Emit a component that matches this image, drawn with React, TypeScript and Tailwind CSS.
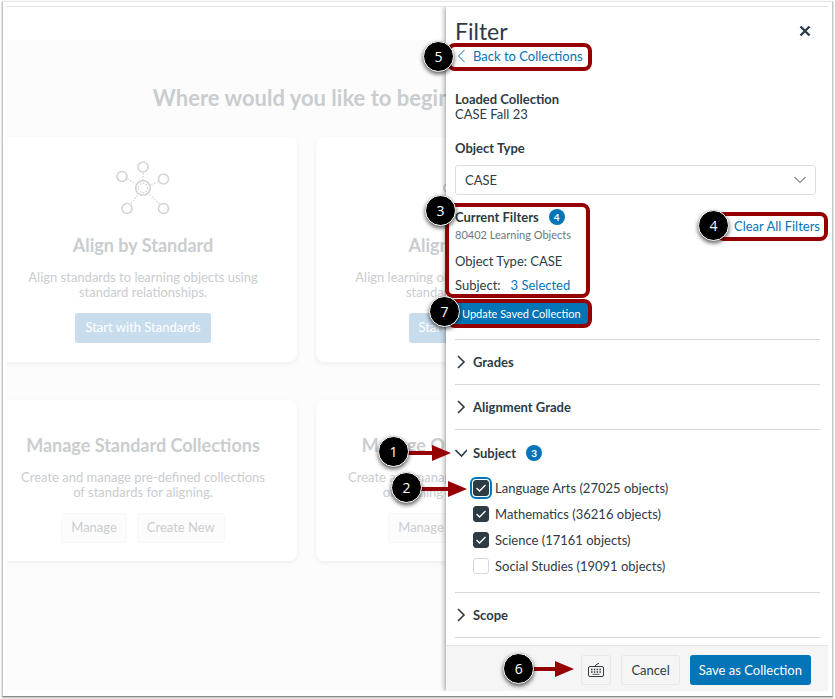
import React, { useState } from "react";

interface CalloutProps {
  label: string;
  className: string;
}

interface SubjectOption {
  id: string;
  label: string;
  checked: boolean;
}

const subjectOptions: SubjectOption[] = [
  { id: "language-arts", label: "Language Arts (27025 objects)", checked: true },
  { id: "mathematics", label: "Mathematics (36216 objects)", checked: true },
  { id: "science", label: "Science (17161 objects)", checked: true },
  { id: "social-studies", label: "Social Studies (19091 objects)", checked: false },
];

// Numbered black marker
const Callout: React.FC<CalloutProps> = ({ label, className }) => (
  <span
    className={`absolute z-20 flex size-[31px] items-center justify-center rounded-full border border-white bg-black font-['Open_Sans',sans-serif] text-[14px] font-normal leading-none text-white shadow-[0_2px_4px_rgba(0,0,0,0.65)] ${className}`}
  >
    {label}
  </span>
);

// Red outline around a control
const Highlight: React.FC<{ className: string }> = ({ className }) => (
  <span
    className={`pointer-events-none absolute z-10 rounded-lg border-4 border-[#950003] ${className}`}
  />
);

const Arrow: React.FC<{ length: number; className: string }> = ({ length, className }) => (
  <svg
    aria-hidden="true"
    width={length}
    height="16"
    viewBox={`0 0 ${length} 16`}
    className={`absolute z-10 ${className}`}
  >
    <path
      d={`M0 6H${length - 19}V0L${length} 8L${length - 19} 16V10H0Z`}
      fill="#950003"
    />
  </svg>
);

const Chevron: React.FC<{ open?: boolean }> = ({ open }) => (
  <svg
    aria-hidden="true"
    width="12"
    height="14"
    viewBox="0 0 12 14"
    fill="none"
    stroke="#2d3b45"
    strokeWidth="1.6"
    className="shrink-0"
  >
    <path d={open ? "M0.5 4L6.5 10L12 4" : "M3 1L9 7L3 13"} />
  </svg>
);

const CountBadge: React.FC<{ count: number }> = ({ count }) => (
  <span className="flex size-4 items-center justify-center rounded-full bg-[#0374b5] text-[10px] font-bold leading-none text-white">
    {count}
  </span>
);

const StandardIcon = () => (
  <svg aria-hidden="true" width="54" height="54" viewBox="0 0 54 54" fill="none" stroke="#d3d3d3">
    <g strokeWidth="1.6">
      <circle cx="27" cy="27" r="7.3" />
      <circle cx="27" cy="6" r="5" />
      <circle cx="6" cy="15.5" r="5" />
      <circle cx="47.5" cy="18" r="5" />
      <circle cx="11" cy="47.5" r="5" />
      <circle cx="47.5" cy="47.5" r="5" />
    </g>
    <g strokeWidth="1.3" strokeDasharray="1.4 1.6">
      <circle cx="27" cy="27" r="4.6" />
      <path d="M27 12V19M11.5 18L19.5 23M42 20.5L34.5 24M15 42.5L22 33.5M43.5 43L33 33" />
    </g>
  </svg>
);

const ObjectIcon = () => (
  <svg aria-hidden="true" width="54" height="54" viewBox="0 0 54 54" fill="none" stroke="#d3d3d3">
    <g strokeWidth="1.6">
      <circle cx="27" cy="27" r="7.3" />
      <circle cx="4.8" cy="27" r="4" />
      <circle cx="49.2" cy="27" r="4" />
    </g>
    <path strokeWidth="1.3" strokeDasharray="1.4 1.6" d="M10 27H19M35 27H44" />
  </svg>
);

const card =
  "flex flex-col items-center rounded-lg bg-white text-center shadow-[0_2px_5px_rgba(0,0,0,0.06)]";
const cardTitle = "whitespace-nowrap text-[18px] font-bold leading-6 text-[#c9cdd0]";
const cardText = "mt-[13px] whitespace-nowrap text-[13px] leading-[15px] text-[#c9cdd0]";
const cardPrimary =
  "mt-[13px] h-[30px] rounded-[3px] bg-[#c7dced] px-[10px] text-[13px] text-white";
const cardSecondary =
  "h-[30px] rounded-[3px] border border-[#f7f7f7] bg-[#fcfcfc] px-[9px] text-[13px] text-[#c9cdd0]";

const StartPage = () => (
  <main className="flex min-w-0 flex-1 flex-col overflow-hidden bg-white pt-[33px]">
    <div className="flex-1 bg-[#fcfcfc] pt-[46px]">
      <div className="-ml-[18px] w-[635px]">
        <h1 className="text-center text-[22px] font-bold leading-6 text-[#c9cdd0]">
          Where would you like to begin?
        </h1>
        <div className="mt-[27px] grid grid-cols-2 gap-x-[19px] gap-y-[38px]">
          <section className={`${card} pt-6 pb-[19px]`}>
            <StandardIcon />
            <h2 className={`mt-[18px] ${cardTitle}`}>Align by Standard</h2>
            <p className={cardText}>
              Align standards to learning objects using
              <br />
              standard relationships.
            </p>
            <button className={cardPrimary}>Start with Standards</button>
          </section>
          <section className={`${card} pt-6 pb-[19px]`}>
            <ObjectIcon />
            <h2 className={`mt-[18px] ${cardTitle}`}>Align by Object</h2>
            <p className={cardText}>
              Align learning objects to standards using
              <br />
              standard relationships.
            </p>
            <button className={cardPrimary}>Start with Objects</button>
          </section>
          <section className={`${card} pt-[33px] pb-[18px]`}>
            <h2 className={cardTitle}>Manage Standard Collections</h2>
            <p className={cardText}>
              Create and manage pre-defined collections
              <br />
              of standards for aligning.
            </p>
            <div className="mt-[13px] flex gap-[10px]">
              <button className={cardSecondary}>Manage</button>
              <button className={cardSecondary}>Create New</button>
            </div>
          </section>
          <section className={`${card} pt-[33px] pb-[18px]`}>
            <h2 className={cardTitle}>Manage Object Collections</h2>
            <p className={cardText}>
              Create and manage pre-defined collections
              <br />
              of learning objects for aligning.
            </p>
            <div className="mt-[13px] flex gap-[10px]">
              <button className={cardSecondary}>Manage</button>
              <button className={cardSecondary}>Create New</button>
            </div>
          </section>
        </div>
      </div>
    </div>
  </main>
);

const SectionToggle: React.FC<{
  title: string;
  open?: boolean;
  children?: React.ReactNode;
}> = ({ title, open, children }) => (
  <div className="relative">
    <button
      aria-expanded={!!open}
      className="flex h-11 w-full items-center text-left text-[13px] font-bold"
    >
      <Chevron open={open} />
      <span className="ml-[6px] mr-[10px]">{title}</span>
      {open && <CountBadge count={3} />}
    </button>
    {children}
  </div>
);

const FilterPanel = () => {
  const [subjects, setSubjects] = useState(subjectOptions);

  const toggleSubject = (id: string) => {
    setSubjects(subjects.map((s) => (s.id === id ? { ...s, checked: !s.checked } : s)));
  };

  return (
    <aside className="relative flex w-[382px] shrink-0 flex-col bg-white text-[13px] leading-4 text-[#2d3b45] shadow-[-1px_0_5px_rgba(0,0,0,0.4)] [clip-path:inset(0_0_0_-80px)]">
      <div className="flex-1 pb-2 pl-[9px] pr-2 pt-3">
        <div className="flex items-center justify-between pr-[9px]">
          <h2 className="text-[23px] leading-6">Filter</h2>
          <button aria-label="Close" className="size-3">
            <svg aria-hidden="true" viewBox="0 0 12 12" stroke="#2d3b45" strokeWidth="2.4">
              <path d="M1.5 1.5L10.5 10.5M10.5 1.5L1.5 10.5" />
            </svg>
          </button>
        </div>

        <div className="relative mt-[5px] flex">
          <a href="#collections" className="flex items-center text-[#0374b5]">
            <svg
              aria-hidden="true"
              width="12"
              height="14"
              viewBox="0 0 12 14"
              fill="none"
              stroke="#0374b5"
              strokeWidth="1"
            >
              <path d="M9.5 1L3.5 7L9.5 13" />
            </svg>
            <span className="ml-[6px]">Back to Collections</span>
          </a>
          <Highlight className="-left-2 -top-[5px] h-7 w-[145px]" />
          <Callout label="5" className="-left-8 -top-[7px]" />
        </div>

        <div className="mt-7 leading-[15px]">
          <h3 className="font-bold">Loaded Collection</h3>
          <p>CASE Fall 23</p>
        </div>

        <label htmlFor="object-type" className="mt-[18px] block font-bold">
          Object Type
        </label>
        <div className="relative mr-1 mt-[9px]">
          <select
            id="object-type"
            defaultValue="CASE"
            className="h-[30px] w-full appearance-none rounded-[3px] border border-[#dcdfe1] bg-white px-[9px]"
          >
            <option>CASE</option>
          </select>
          <svg
            aria-hidden="true"
            width="12"
            height="8"
            viewBox="0 0 12 8"
            fill="none"
            stroke="#2d3b45"
            strokeWidth="1"
            className="pointer-events-none absolute right-[10px] top-[11px]"
          >
            <path d="M0.5 1L6 6.5L11.5 1" />
          </svg>
        </div>

        <div className="mt-[14px] flex items-start justify-between">
          <div className="relative">
            <div className="flex items-center gap-[10px]">
              <h3 className="font-bold">Current Filters</h3>
              <CountBadge count={4} />
            </div>
            <p className="mt-[2px] text-[11px] text-[#6b7780]">80402 Learning Objects</p>
            <p className="mt-[10px]">Object Type: CASE</p>
            <p className="mt-2">
              Subject:
              <a href="#subject" className="ml-[10px] text-[#0374b5]">
                3 Selected
              </a>
            </p>
            <Highlight className="-left-[10px] -top-[6px] h-[95px] w-[145px]" />
            <Callout label="3" className="-left-[30px] -top-[14px]" />
          </div>
          <div className="relative mt-[9px]">
            <button className="block text-[#0374b5]">Clear All Filters</button>
            <Highlight className="-left-[18px] -right-2 -top-[6px] h-[29px]" />
            <Callout label="4" className="-left-[36px] -top-[8px]" />
          </div>
        </div>

        <div className="relative mt-[9px] inline-block align-top">
          <button className="block h-[23px] rounded-[3px] bg-[#0374b5] px-[7px] text-[11px] text-white">
            Update Saved Collection
          </button>
          <Highlight className="-left-2 -right-1 -top-[3px] h-[29px]" />
          <Callout label="7" className="-left-[26px] -top-[6px]" />
        </div>

        <div className="mt-[14px] divide-y divide-[#d5d9dc] border-y border-[#d5d9dc]">
          <SectionToggle title="Grades" />
          <SectionToggle title="Alignment Grade" />
          <div className="pt-px">
            <SectionToggle title="Subject" open>
              <Callout label="1" className="-left-[77px] top-[5px]" />
              <Arrow length={43} className="-left-[47px] top-[14px]" />
            </SectionToggle>
            <ul className="flex flex-col gap-[10px] pb-[18px] pl-[18px] pt-[5px]">
              {subjects.map((subject, index) => (
                <li key={subject.id} className="relative flex items-center">
                  <input
                    id={subject.id}
                    type="checkbox"
                    checked={subject.checked}
                    onChange={() => toggleSubject(subject.id)}
                    className={`size-4 appearance-none rounded-[3px] border border-[#d5d9dc] bg-white checked:border-[#2d3b45] checked:bg-[#2d3b45] ${
                      index === 0 ? "outline-2 outline-offset-1 outline-[#0374b5]" : ""
                    }`}
                  />
                  {subject.checked && (
                    <svg
                      aria-hidden="true"
                      width="10"
                      height="8"
                      viewBox="0 0 10 8"
                      fill="none"
                      stroke="white"
                      strokeWidth="1.3"
                      className="pointer-events-none absolute left-[3px] top-1"
                    >
                      <path d="M0.5 4L3.5 7L9.5 1" />
                    </svg>
                  )}
                  <label htmlFor={subject.id} className="ml-[6px]">
                    {subject.label}
                  </label>
                  {index === 0 && (
                    <>
                      <Callout label="2" className="-left-[82px] -top-[8px]" />
                      <Arrow length={46} className="-left-[52px] top-[1px]" />
                    </>
                  )}
                </li>
              ))}
            </ul>
          </div>
          <SectionToggle title="Scope" />
        </div>
      </div>

      <footer className="-mt-px flex justify-end gap-[10px] border-t border-[#e3e5e6] bg-[#f5f5f5] pb-[6px] pr-[17px] pt-[9px]">
        <div className="relative">
          <button
            aria-label="Keyboard shortcuts"
            className="flex size-[30px] items-center justify-center rounded-[3px] border border-[#e6e8e9]"
          >
            <svg
              aria-hidden="true"
              width="16"
              height="16"
              viewBox="0 0 16 16"
              fill="none"
              stroke="#2d3b45"
              className="shrink-0"
            >
              <rect x="0.5" y="4.5" width="15" height="10" rx="1.5" />
              <path d="M7.5 4.5V3.2L11 1.2" />
              <path d="M3 7.5H13" strokeDasharray="1.5 1.3" strokeWidth="1.4" />
              <path d="M3 10H13" strokeDasharray="1.5 1.3" strokeWidth="1.4" />
              <path d="M4.5 12.3H11.5" strokeWidth="0.8" />
            </svg>
          </button>
          <Callout label="6" className="-left-[78px] -top-[2px]" />
          <Arrow length={42} className="-left-[49px] top-[6px]" />
        </div>
        <button className="h-[30px] rounded-[3px] border border-[#e6e8e9] px-[9px]">Cancel</button>
        <button className="h-[30px] rounded-[3px] bg-[#0374b5] px-[9px] text-white">
          Save as Collection
        </button>
      </footer>
    </aside>
  );
};

const App = () => (
  <div className="flex min-h-screen bg-white px-[2px] pb-[2px] pt-px font-[Lato,sans-serif]">
    <div className="flex min-w-0 flex-1 border border-[#c4c4c4] border-b-[#8a8a8a] border-t-[#e8e8e8] px-1 pb-[5px] pt-1 shadow-[0_1px_2px_rgba(0,0,0,0.3)]">
      <div className="flex min-w-0 flex-1 border-t border-[#e0e0e0]">
        <StartPage />
        <FilterPanel />
      </div>
    </div>
  </div>
);

export default App;
